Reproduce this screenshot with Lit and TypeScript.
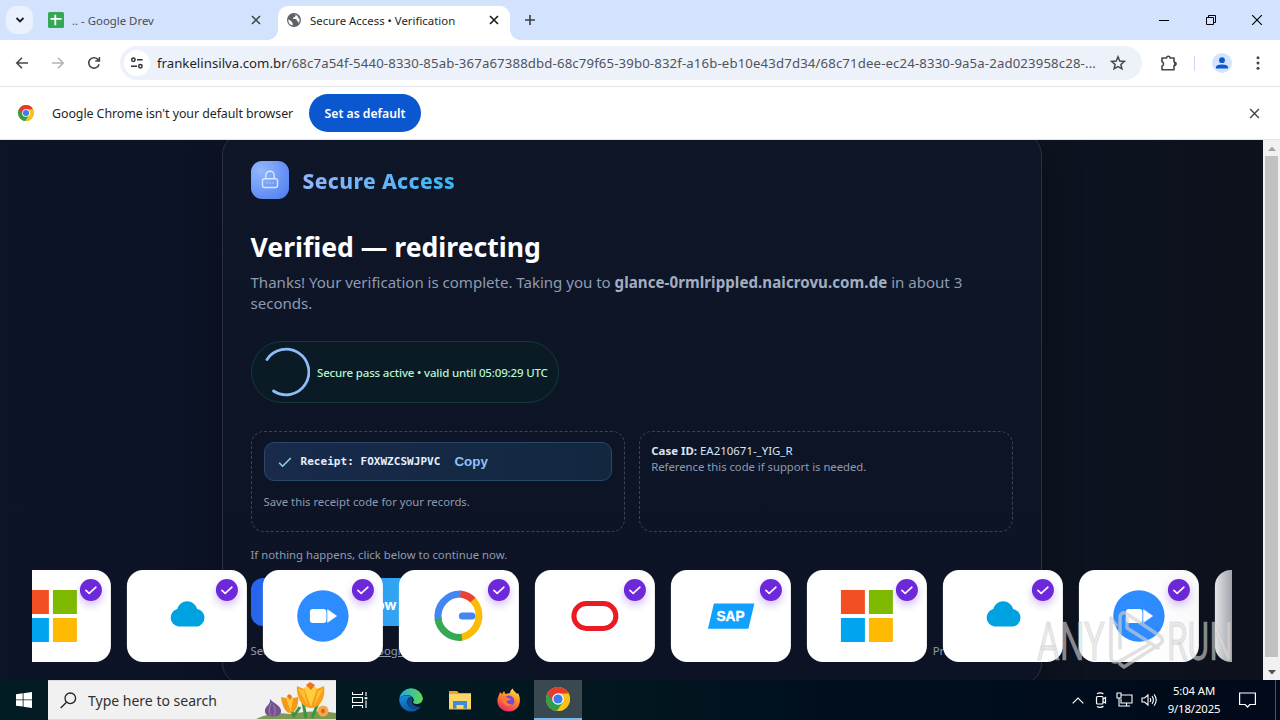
import { LitElement, html, svg, css } from "lit";
import { customElement, property } from "lit/decorators.js";

const chromeLogo = (size: number) => html`<svg width=${size} height=${size} viewBox="0 0 24 24">
  <circle cx="12" cy="12" r="12" fill="#fbc116" />
  <path d="M12 12 L1.6 6 A12 12 0 0 0 11 23.95 L17.2 15 Z" fill="#2f9e4f" />
  <path d="M12 12 L6.8 15 L1.6 6 A12 12 0 0 1 22.4 6 Z" fill="#e33b2e" />
  <path d="M12 6.5 H22.6 A12 12 0 0 1 11 23.95 L17 15 Z" fill="#fbc116" />
  <circle cx="12" cy="12" r="5.8" fill="#fff" />
  <circle cx="12" cy="12" r="4.6" fill="#3b7ded" />
</svg>`;

const cross = (size: number, color: string, w = 1.5) => html`<svg width=${size} height=${size} viewBox="0 0 10 10">
  <path d="M1 1 9 9M9 1 1 9" stroke=${color} stroke-width=${w} fill="none" />
</svg>`;

const brandArt: Record<string, unknown> = {
  microsoft: svg`
    <rect x="34" y="20" width="24" height="24" fill="#f25022" />
    <rect x="62" y="20" width="24" height="24" fill="#7fba00" />
    <rect x="34" y="48" width="24" height="24" fill="#00a4ef" />
    <rect x="62" y="48" width="24" height="24" fill="#ffb900" />`,
  cloud: svg`<path fill="#00a1e0" d="M51.5 56.5a8.9 8.9 0 0 1-1.2-17.4 10.3 10.3 0 0 1 20-0.1A8.9 8.9 0 0 1 70.3 56.5Z" />`,
  zoom: svg`
    <circle cx="60" cy="46" r="25.7" fill="#2d8cff" />
    <rect x="47" y="39" width="16.5" height="14" rx="3" fill="#fff" />
    <path d="M64.6 39.5 73.8 46 64.6 52.5Z" fill="#fff" stroke="#fff" stroke-width=".5" stroke-linejoin="round" />`,
  google: svg`
    <g fill="none" stroke-width="7">
      <path d="M39.4 50 A22.3 22.3 0 0 1 62 24" stroke="#4285f4" />
      <path d="M61.5 24 A22 22 0 0 1 75 31" stroke="#ea4335" />
      <path d="M74 30.2 A22.3 22.3 0 0 1 62.5 67.3" stroke="#fbbc05" />
      <path d="M63 67.3 A22 22 0 0 1 39 48.5" stroke="#34a853" />
    </g>
    <rect x="60" y="42.6" width="16.5" height="7" rx="3.5" fill="#4285f4" />`,
  oracle: svg`<rect x="39" y="33.5" width="42" height="25" rx="12.5" fill="none" stroke="#ea1b22" stroke-width="5" />`,
  sap: svg`
    <path d="M43 33.5H83.5L77.5 58.7H37Z" fill="#12a0ff" />
    <text x="59.6" y="51" text-anchor="middle" textLength="28" lengthAdjust="spacingAndGlyphs"
      font-family="Liberation Sans, sans-serif" font-weight="700" font-size="14" fill="#fff" stroke="#fff" stroke-width=".4">SAP</text>`,
};

@customElement("brand-tile")
export class BrandTile extends LitElement {
  @property() brand = "microsoft";
  static styles = css`
    :host { display: block; flex: none; position: relative; width: 120px; height: 92px; border-radius: 16px;
      background: #fff; box-sizing: border-box; }
    .art { display: block; }
    .badge { position: absolute; top: 9px; right: 9px; width: 22px; height: 22px; border-radius: 50%;
      background: #6d28d9; box-shadow: 0 4px 9px rgba(109, 40, 217, .3); display: grid; place-items: center; }
  `;
  render() {
    return html`
      <svg class="art" width="120" height="92" viewBox="0 0 120 92">${brandArt[this.brand]}</svg>
      <span class="badge"><svg width="14" height="14" viewBox="0 0 14 14">
        <path d="M2 7.4 5.3 10.4 12 4.2" fill="none" stroke="#fff" stroke-width="1.6" stroke-linecap="round" stroke-linejoin="round" />
      </svg></span>`;
  }
}

@customElement("browser-chrome")
export class BrowserChrome extends LitElement {
  static styles = css`
    :host { display: block; font: 12px/16px "Noto Sans", sans-serif; color: #1f1f1f; background: #fff; height: 140px; }
    svg { display: block; flex: none; }
    .tabs { height: 40px; background: #d3e3fd; display: flex; align-items: flex-start; }
    .menu { width: 27px; height: 28px; margin: 6px 0 0 6px; border-radius: 10px; background: #e9f0fe; display: grid; place-items: center; }
    .tab { display: flex; align-items: center; height: 34px; margin-top: 6px; box-sizing: border-box; }
    .idle { width: 245px; padding: 0 17px 6px 15px; color: #474d57; }
    .live { width: 232px; padding: 0 11px 6px 9px; background: #fff; border-radius: 10px 10px 0 0; position: relative; }
    .live::before, .live::after { content: ""; position: absolute; bottom: 0; width: 10px; height: 10px; }
    .live::before { left: -10px; background: radial-gradient(circle at 0 0, transparent 9.5px, #fff 10px); }
    .live::after { right: -10px; background: radial-gradient(circle at 100% 0, transparent 9.5px, #fff 10px); }
    .title { flex: 1; margin-left: 8px; padding-top: 1px; font-size: 11.4px; white-space: nowrap; }
    .live .title { margin-left: 9px; }
    .plus { margin: 14px 0 0 14px; }
    .win { margin: 14px 17px 0 auto; display: flex; gap: 34px; }
    .win svg:first-child { margin-right: 1px; }
    .bar { height: 46px; display: flex; align-items: center; border-bottom: 1px solid #e3e6ec; padding-left: 15px; }
    .nav { display: flex; gap: 22px; }
    .omni { margin-left: 19px; width: 1022px; height: 34px; border-radius: 17px; background: #edf1fa; display: flex;
      align-items: center; box-sizing: border-box; padding: 0 16px 0 4px; }
    .site { width: 26px; height: 26px; border-radius: 50%; background: #fff; display: grid; place-items: center; }
    .url { flex: 1; margin-left: 7px; font-size: 13.2px; letter-spacing: .137px; white-space: nowrap; color: #50545b; }
    .url b { font-weight: 400; color: #1f1f1f; letter-spacing: .02px; }
    .tools { display: flex; align-items: center; margin-left: 18px; }
    .rule { width: 1px; height: 15px; background: #c9d9f3; margin: 0 17px 0 16px; }
    .me { width: 20px; height: 20px; border-radius: 50%; background: #d3e3fd; display: grid; place-items: center; margin-right: 24px; }
    .info { height: 52px; display: flex; align-items: center; padding: 0 20px 0 18px; border-bottom: 1px solid #dfe4ea; }
    .msg { margin-left: 18px; padding-top: 1px; width: 241px; font-size: 12.4px; letter-spacing: -.06px; white-space: nowrap; }
    .btn { margin-left: 16px; width: 112px; height: 38px; border-radius: 19px; background: #0b57d0; color: #fff;
      font-weight: 600; font-size: 12.2px; display: grid; place-items: center; white-space: nowrap; box-sizing: border-box; padding-top: 2px; }
    .end { margin-left: auto; }
  `;
  render() {
    return html`
      <div class="tabs">
        <span class="menu"><svg width="10" height="10" viewBox="0 0 10 10"><path d="M1.5 3 5 6.5 8.5 3" fill="none" stroke="#1f1f1f" stroke-width="1.8" /></svg></span>
        <div class="tab idle">
          <svg width="16" height="16" viewBox="0 0 16 16"><rect width="16" height="16" rx="1.5" fill="#34a853" /><path d="M2.5 6.8H13.5M7.3 2.8V13.2" stroke="#fff" stroke-width="1.8" fill="none" /></svg>
          <span class="title">.. - Google Drev</span>${cross(10, "#3c4043")}
        </div>
        <div class="tab live">
          <svg width="14" height="14" viewBox="0 0 14 14"><circle cx="7" cy="7" r="6.3" fill="#5f6368" stroke="#5f6368" stroke-width="1.3" />
            <path d="M1.6 6.3 4.5 8.5 5.6 10.2 5.7 12.6A5.7 5.7 0 0 1 1.3 7ZM7 1.4 8.6 1.8 8.2 3.8 6.3 4.4 6 6H9.4L9.9 8 11.6 8.6 11.2 10.8A5.7 5.7 0 0 0 12.6 6L11 4.6 10.5 2.7Z" fill="#fff" /></svg>
          <span class="title">Secure Access • Verification</span>${cross(10, "#1f1f1f", 1.7)}
        </div>
        <svg class="plus" width="12" height="12" viewBox="0 0 12 12"><path d="M6 1V11M1 6H11" stroke="#3c4043" stroke-width="1.6" /></svg>
        <div class="win">
          <svg width="12" height="12" viewBox="0 0 12 12"><path d="M1 6.5H11" stroke="#000" /></svg>
          <svg width="12" height="12" viewBox="0 0 12 12"><path d="M1.5 3.5H8.5V10.5H1.5ZM3.5 3V1.5H10.5V8.5H9" stroke="#000" fill="none" /></svg>
          ${cross(12, "#000", 0.95)}
        </div>
      </div>
      <div class="bar">
        <div class="nav">
          <svg width="14" height="14" viewBox="0 0 14 14"><path d="M13 7H2M7 1.8 1.8 7 7 12.2" fill="none" stroke="#474747" stroke-width="1.6" /></svg>
          <svg width="14" height="14" viewBox="0 0 14 14"><path d="M1 7H12M7 1.8 12.2 7 7 12.2" fill="none" stroke="#b4b4b4" stroke-width="1.6" /></svg>
          <svg width="14" height="14" viewBox="0 0 14 14"><path d="M12 8.2A5.2 5.2 0 1 1 10.8 3.4L12 4.6M12.4 1V5H8.3" fill="none" stroke="#474747" stroke-width="1.6" /></svg>
        </div>
        <div class="omni">
          <span class="site"><svg width="14" height="12" viewBox="0 0 14 12"><g fill="none" stroke="#303134" stroke-width="1.5"><circle cx="3.4" cy="2.8" r="1.7" /><circle cx="10.4" cy="9.2" r="1.7" /><path d="M7 2.8H12.6M1 9.2H7" /></g></svg></span>
          <span class="url"><b>frankelinsilva.com.br</b>/68c7a54f-5440-8330-85ab-367a67388dbd-68c79f65-39b0-832f-a16b-eb10e43d7d34/68c71dee-ec24-8330-9a5a-2ad023958c28-...</span>
          <svg width="16" height="16" viewBox="0 0 16 16"><path d="M8 1.8 9.8 6 14.3 6.4 10.9 9.4 11.9 13.8 8 11.5 4.1 13.8 5.1 9.4 1.7 6.4 6.2 6Z" fill="none" stroke="#474747" stroke-width="1.5" /></svg>
        </div>
        <div class="tools">
          <svg width="18" height="18" viewBox="0 0 18 18"><path d="M2 4H6.6A1.7 1.7 0 0 1 10 4H14V8A1.6 1.6 0 0 1 14 11.5V15.8H2V12A2.2 2.2 0 0 0 2 7.8Z" fill="none" stroke="#474747" stroke-width="1.6" stroke-linejoin="round" /><rect x="14" y="8" width="2.6" height="3.6" rx="1.3" fill="#474747" /></svg>
          <span class="rule"></span>
          <span class="me"><svg width="14" height="14" viewBox="0 0 14 14"><circle cx="7" cy="4.2" r="2.9" fill="#0b57d0" /><path d="M1 12.5V11Q1 8.5 7 8.5T13 11V12.5Z" fill="#0b57d0" /></svg></span>
          <svg width="4" height="14" viewBox="0 0 4 14"><g fill="#474747"><circle cx="2" cy="1.7" r="1.5" /><circle cx="2" cy="7" r="1.5" /><circle cx="2" cy="12.3" r="1.5" /></g></svg>
        </div>
      </div>
      <div class="info">
        ${chromeLogo(16)}
        <span class="msg">Google Chrome isn't your default browser</span>
        <span class="btn">Set as default</span>
        <span class="end">${cross(11, "#474747", 1.3)}</span>
      </div>`;
  }
}

@customElement("verify-page")
export class VerifyPage extends LitElement {
  static styles = css`
    :host { display: flex; height: 540px; position: relative; overflow: hidden; font-family: "Noto Sans", sans-serif; color: #e5edff; }
    svg { display: block; flex: none; }
    .view { flex: 1; height: 540px; overflow: hidden; display: flex; justify-content: center; align-items: flex-start;
      background: linear-gradient(90deg, #0c1427 0%, #0c1325 40%, #0d1320 82%, #0c111c 100%); }
    .card { width: 820px; height: 552px; margin: -7px 0 0 1px; box-sizing: border-box; border: 1px solid #2a3142; border-radius: 22px;
      background: linear-gradient(180deg, #0e1628, #0c1325); padding: 27px 28px 0 27.5px;
      box-shadow: 0 14px 40px rgba(0, 0, 0, .28); white-space: nowrap; }
    .brand { display: flex; align-items: center; height: 38px; }
    .lock { width: 38px; height: 38px; border-radius: 11px; display: grid; place-items: center;
      background: radial-gradient(circle at 25% 25%, #93b8fd, #4f7df0 95%); }
    .name { margin: 2px 0 0 14px; font-weight: 800; font-size: 21px; line-height: 30px; letter-spacing: .36px; color: transparent;
      background: linear-gradient(90deg, #93b4fb, #38b6f4); -webkit-background-clip: text; background-clip: text; }
    h1 { margin: 31px 0 0; font-size: 26.6px; line-height: 34px; font-weight: 700; color: #fff; }
    .lead { margin: 8px 0 0; font-size: 15.1px; line-height: 21px; letter-spacing: -.035px; color: #8f9bb0; }
    .lead b { font-weight: 700; color: #a3aec0; letter-spacing: .055px; }
    .pill { margin-top: 27px; width: 308px; height: 62px; border-radius: 31px; box-sizing: border-box; border: 1px solid #123a38;
      background: #0b1b26; display: flex; align-items: center; padding-left: 10px; gap: 7.5px; font-size: 11.5px; letter-spacing: -.17px; color: #b5f5d2; font-weight: 500; }
    .grid { display: grid; grid-template-columns: 1fr 1fr; gap: 14px; margin-top: 28px; height: 101px; }
    .box { border: 1px dashed #3b4356; border-radius: 13px; padding: 10px 12px; font-size: 11.3px; line-height: 16px; color: #8f9bb0; box-sizing: border-box; }
    .note { padding: 11px 11.5px; }
    .receipt { display: flex; align-items: center; height: 39px; border: 1px solid #2a4868; border-radius: 10px; box-sizing: border-box;
      background: linear-gradient(90deg, #192a4b, #11283f); padding-left: 13px; margin-bottom: 13px; }
    .code { margin-left: 9px; font: 700 11px/16px "DejaVu Sans Mono", monospace; color: #e6efff; letter-spacing: .04px; }
    .copy { margin-left: 14px; font: 700 13.4px/16px "Liberation Sans", sans-serif; color: #93c0fd; }
    .case { color: #dbe4f5; font-size: 11.45px; }
    .ref { letter-spacing: -.02px; }
    .hint { margin: 15px 0 0; font-size: 11.3px; line-height: 16px; letter-spacing: .015px; color: #8f9bb0; }
    .go { margin-top: 15px; width: 174px; height: 48px; border-radius: 12px; display: flex; align-items: center; justify-content: flex-end;
      box-sizing: border-box; padding: 4px 28px 0 0; background: linear-gradient(90deg, #2563eb, #34b2f3); font-weight: 700; font-size: 14px; color: #fff; }
    .foot { display: flex; justify-content: space-between; margin-top: 17px; font-size: 11.3px; line-height: 16px; color: #8f9bb0; }
    .foot u { margin-left: 34px; }
    .strip { position: absolute; left: 32px; top: 430px; width: 1200px; height: 92px; overflow: hidden; }
    .row { display: flex; gap: 16px; margin-left: -41.5px; transform: translateX(-.1px); }
    .fade { position: absolute; inset: 0 0 0 auto; width: 90px; background: linear-gradient(90deg, rgba(12, 18, 40, 0), rgba(12, 18, 40, .03) 75%, rgba(12, 18, 40, .38)); }
    .mark { position: absolute; left: 1036px; top: 470px; }
    .scroll { width: 17px; background: #f1f1f1; display: flex; flex-direction: column; align-items: center; justify-content: space-between; }
    .arrow { width: 17px; height: 16px; display: grid; place-items: center; }
    .thumb { width: 13px; height: 501px; background: #c1c1c1; margin-bottom: auto; }
  `;
  render() {
    const tiles = ["microsoft", "cloud", "zoom", "google", "oracle", "sap", "microsoft", "cloud", "zoom", "google"];
    return html`
      <div class="view">
        <div class="card">
          <div class="brand">
            <span class="lock"><svg width="20" height="20" viewBox="0 0 20 20"><g fill="none" stroke="#d6e8ff" stroke-width="1.4"><rect x="2.5" y="8.7" width="15" height="8.8" rx="2" /><path d="M5.8 8.5V5.5A4.2 4.2 0 0 1 14.2 5.5V8.5" /><path d="M6.5 13H7.5M9.4 13H10.6M12.5 13H13.5" stroke-opacity=".7" /></g></svg></span>
            <span class="name">Secure Access</span>
          </div>
          <h1>Verified — redirecting</h1>
          <p class="lead">Thanks! Your verification is complete. Taking you to <b>glance-0rmlrippled.naicrovu.com.de</b> in about 3<br />seconds.</p>
          <div class="pill">
            <svg width="48" height="50" viewBox="0 0 48 50"><path d="M5 12.5A22.8 22.8 0 1 1 11.5 44" fill="none" stroke="#8ebcf7" stroke-width="2.8" stroke-linecap="round" /></svg>
            <span class="valid">Secure pass active • valid until 05:09:29 UTC</span>
          </div>
          <div class="grid">
            <div class="box">
              <div class="receipt">
                <svg width="14" height="12" viewBox="0 0 14 12"><path d="M1.2 6.8 4.6 10.2 12.8 2" fill="none" stroke="#8ed0e8" stroke-width="1.6" /></svg>
                <span class="code">Receipt: FOXWZCSWJPVC</span><span class="copy">Copy</span>
              </div>
              <span class="save">Save this receipt code for your records.</span>
            </div>
            <div class="box note"><span class="case"><b>Case ID:</b> EA210671-_YIG_R</span><br /><span class="ref">Reference this code if support is needed.</span></div>
          </div>
          <p class="hint">If nothing happens, click below to continue now.</p>
          <div class="go">Continue now</div>
          <div class="foot"><span>Secure check by<u>Google</u></span><span>Privacy • Terms</span></div>
        </div>
      </div>
      <div class="scroll">
        <span class="arrow"><svg width="8" height="5" viewBox="0 0 8 5"><path d="M0 5 4 0.5 8 5Z" fill="#a3a3a3" /></svg></span>
        <span class="thumb"></span>
        <span class="arrow"><svg width="8" height="5" viewBox="0 0 8 5"><path d="M0 0 4 4.5 8 0Z" fill="#505050" /></svg></span>
      </div>
      <div class="strip">
        <div class="row">${tiles.map((b) => html`<brand-tile brand=${b}></brand-tile>`)}</div>
        <div class="fade"></div>
      </div>
      <svg class="mark" width="210" height="68" viewBox="0 0 210 68">
        <g font-family="Roboto, sans-serif" font-weight="400" font-size="53" fill="#dcdcde" fill-opacity=".6" stroke="#b0b0b0" stroke-opacity=".3" stroke-width="1.2">
          <text x="1" y="50" textLength="68" lengthAdjust="spacingAndGlyphs">ANY</text>
          <text x="131" y="50" textLength="66" lengthAdjust="spacingAndGlyphs">RUN</text>
        </g>
        <g fill="none" stroke="#cfcfcf" stroke-opacity=".65" stroke-width="3.5" stroke-linejoin="round" stroke-linecap="round">
          <path d="M80 15 75 8V48Q76 54 84 51L112 35" />
          <path d="M84 38V6Q86 1 91 4L124 26Q129 30 124 34L88 57 84 54M91 8V18L122 38" />
        </g>
      </svg>`;
  }
}

@customElement("task-bar")
export class TaskBar extends LitElement {
  static styles = css`
    :host { display: flex; height: 40px; font-family: "Noto Sans", sans-serif; color: #fff;
      background: linear-gradient(90deg, #021c24 0%, #021820 45%, #010f1d 65%, #000a1a 100%); }
    svg { display: block; flex: none; }
    .start { width: 48px; display: grid; place-items: center; }
    .search { width: 288px; background: #f1f1f1; display: flex; align-items: center; color: #303030; font-size: 14px; box-sizing: border-box; padding-left: 12px; border: solid #dcdcdc; border-width: 1px 0; }
    .search .ask { margin-left: 11px; flex: 1; white-space: nowrap; }
    .app { width: 49px; display: grid; place-items: center; }
    .apps { display: flex; }
    .apps .app:first-child { width: 47px; margin-right: 3px; }
    .app.active { width: 48px; background: #3a4950; border-bottom: 2px solid #76b9ed; box-sizing: border-box; margin-left: 1px; }
    .tray { margin-left: auto; display: flex; align-items: center; gap: 8px; }
    .clock { width: 60px; text-align: center; font-size: 11.3px; line-height: 18px; letter-spacing: -.1px; margin: 0 7px 0 -2px; white-space: nowrap; }
    .peek { width: 1px; height: 40px; background: #4a5560; margin: 0 4px 0 11px; }
  `;
  render() {
    return html`
      <span class="start"><svg width="16" height="16" viewBox="0 0 16 16"><path d="M0 2.3 6.7 1.3V7.5H0ZM7.5 1.2 16 0V7.5H7.5ZM0 8.3H6.7V14.6L0 13.7ZM7.5 8.3H16V16L7.5 14.8Z" fill="#fff" /></svg></span>
      <div class="search">
        <svg width="17" height="17" viewBox="0 0 17 17"><g fill="none" stroke="#222" stroke-width="1.3"><circle cx="10.3" cy="6.3" r="5.3" /><path d="M6.5 10.3 0.7 16" /></g></svg>
        <span class="ask">Type here to search</span>
        <svg width="80" height="38" viewBox="0 0 80 38">
          <path d="M0 38Q16 30 34 33 60 28 80 32V38Z" fill="#7d9a55" />
          <path d="M50 37 46 16M56 37 62 22M38 36 34 24M37 36 44 26" stroke="#3d9440" stroke-width="3" fill="none" />
          <path d="M14 18C17 22 26 25 25 31S10 37 9 31 15 24 14 18Z" fill="#75518f" /><path d="M15 22C13 27 12 31 15 35M17 24C20 28 20 31 18 35" stroke="#9d78b3" stroke-width="1.1" fill="none" />
          <path d="M25 16 30 17 33 14 37 17 42 16C43 24 40 31 35 32S26 25 25 16Z" fill="#f39a1c" /><path d="M30 17 35 31 37 17 33 15Z" fill="#ffc83a" /><path d="M31 15 33 13 36 15 34 19Z" fill="#ea7420" />
          <path d="M41 5 48 8 54 2 61 8 68 5C70 17 64 27 55 27S40 16 41 5Z" fill="#f7a01a" /><path d="M48 7 55 26 61 7 54 3Z" fill="#ffce3e" /><path d="M42 8 52 25 48 9ZM67 8 58 25 62 10Z" fill="#ffc02e" /><path d="M50 4 54 1 59 4 55 9Z" fill="#ea7420" />
          <circle cx="67" cy="30" r="5.5" fill="#f5a94a" /><circle cx="67" cy="30" r="2.2" fill="#d96a1a" />
        </svg>
      </div>
      <div class="apps">
        <span class="app"><svg width="16" height="16" viewBox="0 0 16 16"><g fill="none" stroke="#fff" stroke-width="1.1"><path d="M.5 0V2.5H10.5V0M.5 16V13.5H10.5V16M.5 5.5H10.5V10.5H.5ZM14 0V4M14 8.5V16" /><path d="M12.6 6.2H15.4" stroke-width="2" /></g></svg></span>
        <span class="app">
          <svg width="24" height="24" viewBox="0 0 24 24"><defs><linearGradient id="ea" x1="0" x2="1"><stop offset="0" stop-color="#1fa9e8" /><stop offset="1" stop-color="#62d94e" /></linearGradient><linearGradient id="eb" x1="0" y1="0" x2=".4" y2="1"><stop offset="0" stop-color="#1b8fd8" /><stop offset="1" stop-color="#0c58a8" /></linearGradient></defs>
            <path d="M.2 11A12 12 0 0 1 23.9 10C24 14 20.5 16 17.5 16S13.5 14.6 14.4 13.5C16 10 12 7 8 7S1 9 .2 11Z" fill="url(#ea)" />
            <path d="M.2 11C2 7 10 6 13 9.5 9 8.5 7 13 9 17S17 21.5 22 18.5A12 12 0 0 1 .2 11Z" fill="url(#eb)" />
            <path d="M13 9.5C9.5 9 7.5 13 9 17S17 21.5 22 18.5C16 20 11 15 13.5 12.5Z" fill="#12488c" /></svg>
        </span>
        <span class="app"><svg width="22" height="20" viewBox="0 0 22 20"><path d="M0 1H8L10 3H22V19H0Z" fill="#e8a623" /><path d="M0 4H22V19H0Z" fill="#fcd667" /><path d="M4 11H18V19H14.5V15H7.5V19H4Z" fill="#3b8dd6" /><path d="M0 19H22" stroke="#e8b440" /></svg></span>
        <span class="app"><svg width="24" height="24" viewBox="0 0 24 24"><defs><linearGradient id="fa" x1=".8" y1="0" x2=".3" y2="1"><stop offset="0" stop-color="#ffe14a" /><stop offset=".45" stop-color="#ff8a24" /><stop offset="1" stop-color="#f0246a" /></linearGradient></defs>
            <path d="M3 4 5 6 7 3 8.5 6 13 5C13 3 14.5 1 16 .5 16 3 19 4 20 6L21 5C25 12 23 23 12 23.5 3 23.5-2 15 1.5 8Z" fill="url(#fa)" /><circle cx="12" cy="13" r="5.4" fill="#7a48d8" /><path d="M5 9Q9 8 11 10L14 11Q12 13 9.5 13 10 17 16 16 12 20 8 17 5 14 5 9Z" fill="#ff7b2c" /></svg></span>
        <span class="app active">${chromeLogo(24)}</span>
      </div>
      <div class="tray">
        <svg width="12" height="7" viewBox="0 0 12 7"><path d="M.7 6.3 6 1 11.3 6.3" fill="none" stroke="#fff" stroke-width="1.2" /></svg>
        <svg width="16" height="16" viewBox="0 0 16 16"><g fill="none" stroke="#fff" stroke-width="1.2"><rect x="4.5" y="4.5" width="6.5" height="7.5" rx="1" /><path d="M11 7 13.5 5.5V11L11 9.5M5 1.8Q8 0 11.5 1.8M5 14.4Q8 16.2 11.5 14.4" /></g></svg>
        <svg width="17" height="16" viewBox="0 0 17 16"><g fill="none" stroke="#fff" stroke-width="1.1"><path d="M5.5 3H16V11H5V7M10.5 11V14M7 14H14M1 1H5V6H1ZM3 6V14H7" /></g></svg>
        <svg width="17" height="16" viewBox="0 0 17 16"><path d="M1 6H3.5L7 3V13L3.5 10H1ZM9 6Q10.5 8 9 10M11 4.2Q13.8 8 11 11.8M13 2.3Q17.5 8 13 13.7" fill="none" stroke="#fff" stroke-width="1.1" /></svg>
        <div class="clock">5:04 AM<br />9/18/2025</div>
        <svg width="17" height="16" viewBox="0 0 17 16"><path d="M.6 1H16.4V12.5H10.8L8.5 15 6.2 12.5H.6Z" fill="none" stroke="#fff" stroke-width="1.2" /></svg>
        <span class="peek"></span>
      </div>`;
  }
}

@customElement("app-root")
export class AppRoot extends LitElement {
  static styles = css`
    :host { display: flex; flex-direction: column; width: 1280px; height: 720px; overflow: hidden; }
  `;
  render() {
    return html`<browser-chrome></browser-chrome><verify-page></verify-page><task-bar></task-bar>`;
  }
}
